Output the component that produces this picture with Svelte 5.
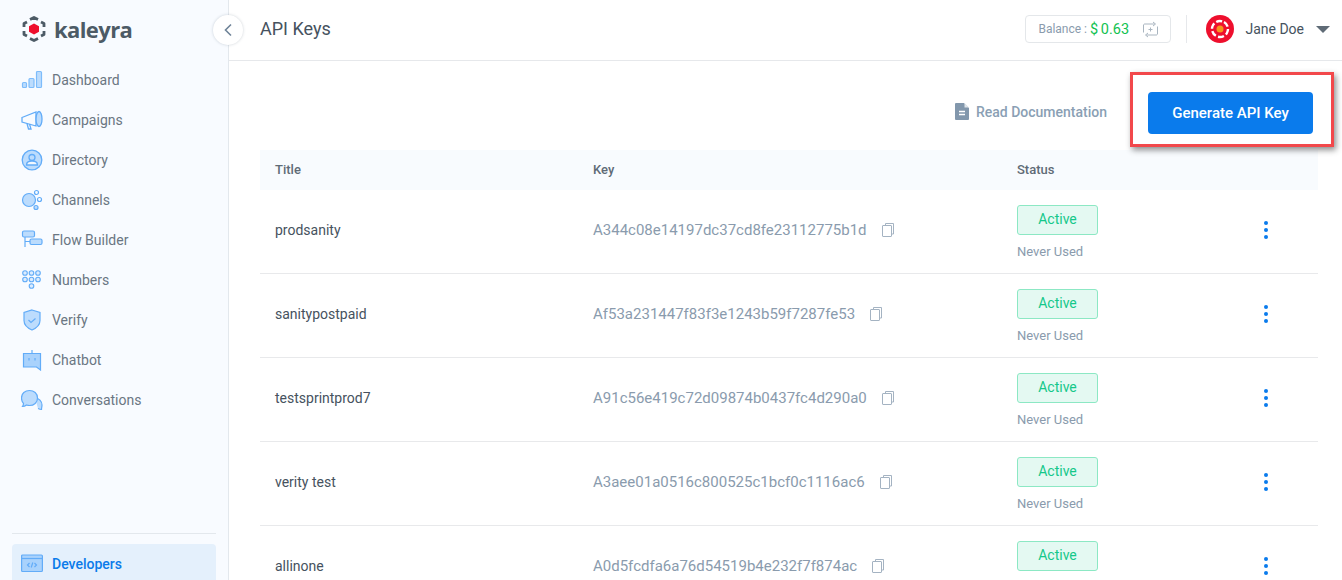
<script>
  const nav = ['Dashboard', 'Campaigns', 'Directory', 'Channels', 'Flow Builder', 'Numbers', 'Verify', 'Chatbot', 'Conversations'];

  const keys = [
    { title: 'prodsanity', key: 'A344c08e14197dc37cd8fe23112775b1d' },
    { title: 'sanitypostpaid', key: 'Af53a231447f83f3e1243b59f7287fe53' },
    { title: 'testsprintprod7', key: 'A91c56e419c72d09874b0437fc4d290a0' },
    { title: 'verity test', key: 'A3aee01a0516c800525c1bcf0c1116ac6' },
    { title: 'allinone', key: 'A0d5fcdfa6a76d54519b4e232f7f874ac' }
  ];
</script>

<div class="page">
  <aside class="sidebar">
    <div class="logo">
      <svg width="24" height="26" viewBox="0 0 24 26">
        <g fill="none" stroke="#4d5b66" stroke-width="2.800" stroke-linejoin="round">
          <path d="M8 3.500 12 1.500l4 2" />
          <path d="M19 6l3 1.500v3.500" />
          <path d="M22 15v3.500L19 20" />
          <path d="M16 22.500l-4 2-4-2" />
          <path d="M5 20l-3-1.500V15" />
          <path d="M2 11V7.500L5 6" />
        </g>
        <path d="M12 7.500l5 2.800v5.400l-5 2.800-5-2.800v-5.400z" fill="#ee0f2d" />
      </svg>
      <span class="wordmark">kaleyra</span>
    </div>

    <nav class="menu">
      {#each nav as item}
        <div class="menu-item">
          <span class="icon">
            {#if item === 'Dashboard'}
              <svg width="22" height="22" viewBox="0 0 22 22" fill="#bcdcfd" stroke="#7dbcfb" stroke-width="1.200">
                <rect x="1.500" y="13.500" width="4" height="5" rx="1" />
                <rect x="8" y="9.500" width="5" height="9" rx="1" />
                <rect x="15.500" y="2.500" width="5" height="16" rx="1" />
              </svg>
            {:else if item === 'Campaigns'}
              <svg width="22" height="22" viewBox="0 0 22 22" fill="#bcdcfd" stroke="#62acf8" stroke-width="1.300">
                <path d="M1 8.500 15 3v14L1 13z" fill="none" />
                <ellipse cx="18" cy="10" rx="3" ry="7.500" />
                <path d="M6 14.500l1.500 5.500h2.500L8.500 15" fill="none" />
              </svg>
            {:else if item === 'Directory'}
              <svg width="22" height="22" viewBox="0 0 22 22" stroke="#62acf8" stroke-width="1.300">
                <circle cx="11" cy="11" r="9.800" fill="#bcdcfd" />
                <circle cx="11" cy="8.500" r="3" fill="none" />
                <path d="M5.500 16c0-3 2-4 5.500-4s5.500 1 5.500 4z" fill="#f2f8ff" />
              </svg>
            {:else if item === 'Channels'}
              <svg width="22" height="22" viewBox="0 0 22 22" stroke="#62acf8" stroke-width="1.200" fill="#bcdcfd">
                <circle cx="8" cy="11" r="6.500" />
                <circle cx="15.500" cy="3.500" r="2" fill="none" />
                <circle cx="18.500" cy="10.500" r="2" fill="none" />
                <circle cx="15" cy="18.500" r="2" />
              </svg>
            {:else if item === 'Flow Builder'}
              <svg width="22" height="22" viewBox="0 0 22 22" stroke="#62acf8" stroke-width="1.200" fill="#bcdcfd">
                <rect x="1.500" y="2" width="12" height="6" rx="1.500" />
                <rect x="9" y="10" width="12" height="5.500" rx="1.500" />
                <path d="M4 8v10M4 12.500h5" fill="none" />
              </svg>
            {:else if item === 'Numbers'}
              <svg width="22" height="22" viewBox="0 0 22 22" stroke="#62acf8" stroke-width="1.100" fill="#dcecfe">
                {#each [4, 10.500, 17] as cx}
                  {#each [4, 10.500] as cy}
                    <circle {cx} {cy} r="2.300" />
                  {/each}
                {/each}
                <circle cx="10.500" cy="17" r="2.300" />
              </svg>
            {:else if item === 'Verify'}
              <svg width="22" height="22" viewBox="0 0 22 22" stroke="#62acf8" stroke-width="1.200" fill="#bcdcfd">
                <path d="M11 1l8 2.500v8c0 4.500-3.500 7.500-8 9.500-4.500-2-8-5-8-9.500v-8z" />
                <path d="M7.500 11l2.500 2.500 4.500-4" fill="none" />
              </svg>
            {:else if item === 'Chatbot'}
              <svg width="22" height="22" viewBox="0 0 22 22" stroke="#62acf8" stroke-width="1.200" fill="#a9d2fc">
                <path d="M2.500 4.500h17v16.500l-4-3H2.500z" />
                <path d="M11 1v3.500M8 9v2.500M14 9v2.500" fill="none" />
              </svg>
            {:else}
              <svg width="22" height="22" viewBox="0 0 22 22" stroke="#62acf8" stroke-width="1.200" fill="#bcdcfd">
                <path d="M14 9a7 7 0 0 1 7 7c0 1.500-.5 2.800-.5 4.500-1.500 0-2.500-.5-3.500-1" />
                <path d="M8.500 1.500c4.500 0 8 3 8 7.500s-3.500 7.500-8 7.500c-1 0-2-.2-3-.5-1 .8-2.500 1.500-4 1.500.8-1 1-2 1-3.200C1.200 13 .5 11 .5 9c0-4.500 3.500-7.500 8-7.500z" />
              </svg>
            {/if}
          </span>
          <span>{item}</span>
        </div>
      {/each}
    </nav>

    <div class="sidebar-foot">
      <div class="menu-item active">
        <span class="icon">
          <svg width="22" height="20" viewBox="0 0 22 20" stroke="#62acf8" stroke-width="1.200" fill="#a9d2fc">
            <rect x="0.600" y="1" width="20.800" height="16.500" rx="1" />
            <path d="M1 4.500h20" fill="none" />
            <path d="M8.500 9l-2 2 2 2M13.500 9l2 2-2 2M11.800 8.500l-1.600 5" fill="none" />
          </svg>
        </span>
        <span>Developers</span>
      </div>
    </div>
  </aside>

  <button class="collapse" aria-label="Collapse sidebar">
    <svg width="10" height="14" viewBox="0 0 10 14" fill="none" stroke="#6e8398" stroke-width="1.600">
      <path d="M8 1.500 2.500 7 8 12.500" />
    </svg>
  </button>

  <main class="main">
    <header class="topbar">
      <h1>API Keys</h1>
      <div class="balance">
        <span class="balance-label">Balance :</span>
        <span class="amount">$ 0.63</span>
        <svg width="17" height="17" viewBox="0 0 17 17" fill="none" stroke="#a9b5c0" stroke-width="1">
          <path d="M12.500 3H2.500a1.500 1.500 0 0 0-1 1v7.500M15.500 5.500V13a1.500 1.500 0 0 1-1 1H4.500" />
          <path d="M11 1l2.500 2L11 5M6 12l-2.500 2L6 16M8.500 6.500v4M6.500 8.500h4" />
        </svg>
      </div>
      <div class="divider"></div>
      <div class="user">
        <svg class="avatar" width="30" height="30" viewBox="0 0 30 30">
          <circle cx="15" cy="15" r="14" fill="#ee0f2d" />
          <circle cx="15" cy="15" r="8" fill="none" stroke="#fff" stroke-width="2.400" stroke-dasharray="6 2.380" transform="rotate(-60 15 15)" />
          <circle cx="15" cy="15" r="3.500" fill="#f7941d" />
        </svg>
        <span class="user-name">Jane Doe</span>
        <span class="caret"></span>
      </div>
    </header>

    <section class="content">
      <div class="actions">
        <a class="docs" href="#docs">
          <svg width="14" height="17" viewBox="0 0 14 17">
            <path d="M1 0h8l5 5v11a1 1 0 0 1-1 1H1a1 1 0 0 1-1-1V1a1 1 0 0 1 1-1z" fill="#8297ac" />
            <path d="M9.500 0 14 4.500H9.500z" fill="#dfe5ea" />
            <path d="M4 8.500h6M4 11.500h6" stroke="#fff" stroke-width="1.500" />
          </svg>
          Read Documentation
        </a>
        <div class="highlight">
          <button class="generate">Generate API Key</button>
        </div>
      </div>

      <div class="table">
        <div class="row head">
          <div>Title</div>
          <div>Key</div>
          <div>Status</div>
        </div>
        {#each keys as row}
          <div class="row">
            <div class="title">{row.title}</div>
            <div class="key">
              <span>{row.key}</span>
              <svg width="12" height="14" viewBox="0 0 12 14" fill="#fff" stroke="#a4b3c2" stroke-width="1">
                <path d="M3.500 2.500v-2h8v10.500h-2" />
                <rect x="0.500" y="2.500" width="9" height="11" rx="0.500" />
              </svg>
            </div>
            <div class="status">
              <span class="badge">Active</span>
              <span class="used">Never Used</span>
            </div>
            <div class="more"><i></i><i></i><i></i></div>
          </div>
        {/each}
      </div>
    </section>
  </main>
</div>

<style>
  :global(body) {
    margin: 0;
    background: #fff;
    font-family: Roboto, sans-serif;
    overflow: hidden;
  }

  .page {
    display: flex;
    height: 580px;
    overflow: hidden;
    position: relative;
  }

  .sidebar {
    width: 229px;
    flex: none;
    box-sizing: border-box;
    display: flex;
    flex-direction: column;
    background: #f8fbff;
    border-right: 1px solid #e3e8ed;
  }

  .logo {
    display: flex;
    align-items: center;
    gap: 8px;
    padding: 13px 0 0 22px;
    height: 45px;
    box-sizing: border-box;
  }

  .wordmark {
    font-family: "Open Sans", sans-serif;
    font-size: 22px;
    font-weight: 700;
    letter-spacing: -0.6px;
    color: #4d5b66;
    line-height: 28px;
  }

  .menu {
    display: flex;
    flex-direction: column;
    margin-top: 15px;
  }

  .menu-item {
    display: flex;
    align-items: center;
    height: 40px;
    padding-left: 20px;
    gap: 9px;
    font-size: 14px;
    color: #6a7682;
  }

  .icon {
    width: 23px;
    display: flex;
    justify-content: center;
  }

  .sidebar-foot {
    margin: auto 12px -4px;
    border-top: 1px solid #e3e8ed;
    padding-top: 10px;
  }

  .active {
    height: 40px;
    padding-left: 8px;
    border-radius: 4px 4px 0 0;
    background: #e4f0fc;
    color: #0a7bea;
    font-weight: 500;
  }

  .collapse {
    position: absolute;
    left: 213px;
    top: 15px;
    width: 30px;
    height: 30px;
    padding: 0;
    border: 0;
    border-radius: 50%;
    background: #fff;
    box-shadow: 0 0 3px rgba(60, 80, 100, 0.25);
    display: flex;
    align-items: center;
    justify-content: center;
  }

  .main {
    flex: 1;
    min-width: 0;
  }

  .topbar {
    display: flex;
    align-items: center;
    height: 61px;
    box-sizing: border-box;
    padding: 0 12px 2px 31px;
    border-bottom: 1px solid #e6e8eb;
  }

  h1 {
    margin: 0 auto 2px 0;
    font-size: 18px;
    font-weight: 400;
    color: #46525e;
  }

  .balance {
    display: flex;
    align-items: center;
    height: 28px;
    width: 146px;
    box-sizing: border-box;
    padding: 0 11px 0 12px;
    border: 1px solid #e4e7ea;
    border-radius: 4px;
  }

  .balance-label {
    font-size: 12px;
    color: #8a9bad;
  }

  .amount {
    margin-left: 3px;
    font-size: 14.500px;
    word-spacing: -1px;
    color: #12c251;
    margin-right: auto;
  }

  .divider {
    width: 1px;
    height: 28px;
    margin: 0 18px 0 15px;
    background: #e6e8eb;
  }

  .user {
    display: flex;
    align-items: center;
  }

  .user-name {
    margin-left: 10px;
    font-size: 14px;
    color: #46525e;
  }

  .caret {
    margin-left: 12px;
    border: 7px solid transparent;
    border-top: 7px solid #5f6b76;
    border-bottom: 0;
  }

  .content {
    padding: 0 24px 0 31px;
  }

  .actions {
    display: flex;
    align-items: flex-start;
    justify-content: flex-end;
    height: 89px;
    box-sizing: border-box;
    padding-top: 31px;
    gap: 41px;
  }

  .docs {
    display: flex;
    align-items: center;
    gap: 7px;
    margin-top: 11px;
    font-size: 14px;
    font-weight: 500;
    color: #8a9fb4;
    text-decoration: none;
  }

  .highlight {
    position: relative;
    margin-right: 5px;
  }

  .highlight::after {
    content: "";
    position: absolute;
    left: -18px;
    right: -21px;
    top: -20px;
    bottom: -13px;
    border: 3px solid #f2484b;
    box-shadow: 2px 3px 6px rgba(0, 0, 0, 0.45);
    pointer-events: none;
  }

  .generate {
    display: block;
    width: 165px;
    height: 42px;
    border: 0;
    border-radius: 4px;
    background: #0a7bec;
    color: #fff;
    font-family: inherit;
    font-size: 15px;
    font-weight: 500;
  }

  .row {
    display: grid;
    grid-template-columns: 318px 424px 1fr auto;
    align-items: center;
    height: 84px;
    padding: 0 50px 4px 15px;
    box-sizing: border-box;
    border-bottom: 1px solid #e8e9eb;
    font-size: 14px;
    color: #46525e;
  }

  .head {
    height: 40px;
    padding-bottom: 2px;
    border: 0;
    background: #f8fbfe;
    font-size: 13px;
    font-weight: 500;
    color: #5f6b76;
  }

  .key {
    display: flex;
    align-items: center;
    gap: 15px;
    font-size: 15px;
    color: #8a9bad;
  }

  .status {
    display: flex;
    flex-direction: column;
    align-items: flex-start;
    gap: 10px;
    padding-top: 5px;
  }

  .badge {
    width: 81px;
    height: 30px;
    box-sizing: border-box;
    display: flex;
    align-items: center;
    justify-content: center;
    padding-bottom: 3px;
    border: 1px solid #8ce8c4;
    border-radius: 3px;
    background: #e4f9f2;
    color: #14c88a;
    font-size: 14px;
  }

  .used {
    font-size: 13px;
    line-height: 14px;
    color: #8a9bad;
  }

  .more {
    display: flex;
    flex-direction: column;
    gap: 3px;
  }

  .more i {
    width: 4px;
    height: 4px;
    border-radius: 50%;
    background: #0a7bec;
  }
</style>
